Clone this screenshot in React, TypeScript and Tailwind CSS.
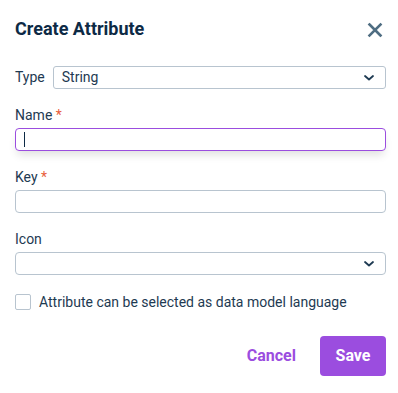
import React from "react";

const Chevron = () => (
  <svg width="12" height="8" viewBox="0 0 12 8" fill="none">
    <path d="M2 2l4 3.5L10 2" stroke="#1e3a52" strokeWidth="1.8" strokeLinecap="round" strokeLinejoin="round" />
  </svg>
);

export default function App() {
  return (
    <div className="w-[398px] h-[393px] bg-white pl-[15px] pr-[12px] pt-[17px] text-[#1e3a52]" style={{ fontFamily: "Roboto, 'Liberation Sans', sans-serif" }}>
      <div className="flex items-center justify-between h-[24px]">
        <h1 className="text-[18px] font-bold text-[#0d2a45] leading-[24px]">Create Attribute</h1>
        <svg width="16" height="16" viewBox="0 0 16 16" className="mr-[3px] mt-[2px]">
          <path d="M2.5 2.5l11 11M13.5 2.5l-11 11" stroke="#4f6d82" strokeWidth="2.6" strokeLinecap="square" />
        </svg>
      </div>

      <div className="flex items-center mt-[25px] gap-[8px]">
        <span className="text-[14px]">Type</span>
        <div className="flex-1 h-[23px] border border-[#b8c4cf] rounded-[3px] flex items-center justify-between pl-[8px] pr-[10px]">
          <span className="text-[14px]">String</span>
          <Chevron />
        </div>
      </div>

      <div className="mt-[16px] text-[14px] leading-[20px]">
        Name <span className="text-[#e8603c]">*</span>
      </div>
      <div className="mt-[3px] h-[23px] border border-[#9b4ddf] rounded-[4px] flex items-center pl-[8px] shadow-[0_6px_8px_-2px_rgba(0,0,0,0.12)]">
        <div className="w-[1px] h-[15px] bg-[#0d2a45]" />
      </div>

      <div className="mt-[16px] text-[14px] leading-[20px]">
        Key <span className="text-[#e8603c]">*</span>
      </div>
      <div className="mt-[3px] h-[23px] border border-[#b8c4cf] rounded-[4px]" />

      <div className="mt-[16px] text-[14px] leading-[20px]">Icon</div>
      <div className="mt-[3px] h-[23px] border border-[#b8c4cf] rounded-[4px] flex items-center justify-end pr-[10px]">
        <Chevron />
      </div>

      <div className="mt-[17px] flex items-center gap-[8px] h-[20px]">
        <div className="w-[16px] h-[16px] border border-[#b8c4cf] rounded-[2px] bg-white" />
        <span className="text-[14px]">Attribute can be selected as data model language</span>
      </div>

      <div className="mt-[24px] flex items-center justify-end">
        <span className="text-[16px] font-bold text-[#9b4ddf] mr-[24px]">Cancel</span>
        <div className="w-[66px] h-[40px] rounded-[4px] bg-[#9b4ddf] flex items-center justify-center text-[16px] font-bold text-white">Save</div>
      </div>
    </div>
  );
}
